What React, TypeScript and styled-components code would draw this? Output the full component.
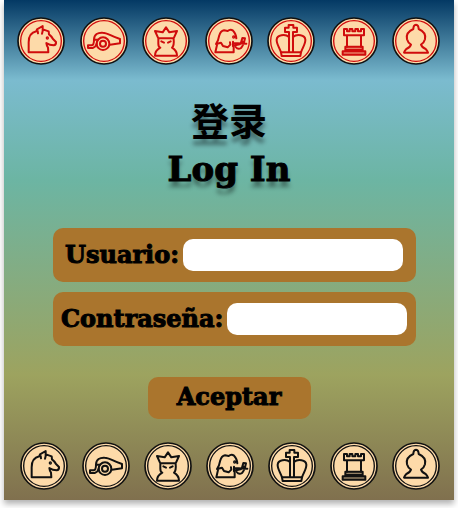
import React from "react";
import styled, { createGlobalStyle } from "styled-components";

const GlobalStyle = createGlobalStyle`
  * { box-sizing: border-box; }
  body { margin: 0; background: #fff; }
`;

const display = `"DejaVu Serif", "Noto Sans CJK SC", serif`;

const Card = styled.main`
  display: flex;
  flex-direction: column;
  align-items: center;
  margin: 0 4px 8px;
  padding: 17px 0 10px;
  color: #000;
  font-family: ${display};
  font-weight: 700;
  background: linear-gradient(
    to bottom,
    #043964 0%,
    #7bbbcf 16%,
    #6cb5a3 36%,
    #9da35f 75%,
    #80704e 100%
  );
  box-shadow: 0 4px 6px rgba(0, 0, 0, 0.3);
`;

const PieceRow = styled.div<{ $inset: number }>`
  display: flex;
  justify-content: space-between;
  align-self: stretch;
  padding: 0 14px 0 ${(p) => p.$inset}px;
`;

const Coin = styled.svg<{ $ink: string }>`
  display: block;
  width: 48px;
  height: 48px;
  fill: none;
  stroke: ${(p) => p.$ink};
  stroke-width: 6;
  stroke-linejoin: round;
  stroke-linecap: round;
`;

const Title = styled.h1`
  display: flex;
  flex-direction: column;
  align-items: center;
  margin: 29px 0 34px;
  font-size: 34px;
  line-height: 50px;
  text-shadow: 0 6px 4px rgba(0, 0, 0, 0.4);
  -webkit-text-stroke: 1px #000;
`;

const Chinese = styled.span`
  font-family: "Noto Sans CJK SC", sans-serif;
  font-size: 38px;
  -webkit-text-stroke: 0;
`;

const Form = styled.form`
  display: flex;
  flex-direction: column;
  align-items: center;
  align-self: stretch;
`;

const Fields = styled.div`
  display: flex;
  flex-direction: column;
  gap: 10px;
  align-self: stretch;
  padding: 0 38px 0 49px;
`;

const Field = styled.div<{ $pad: string }>`
  display: flex;
  align-items: center;
  gap: 4px;
  height: 54px;
  padding: ${(p) => p.$pad};
  border-radius: 10px;
  background: #aa752d;
`;

const Label = styled.label`
  font-size: 24px;
  line-height: 32px;
  -webkit-text-stroke: 1px #000;
`;

const TextBox = styled.input`
  flex: 1;
  min-width: 0;
  height: 32px;
  padding: 0 10px;
  border: 0;
  border-radius: 10px;
  background: #fff;
  font: 400 16px ${display};
`;

const Submit = styled.button`
  width: 163px;
  height: 42px;
  margin: 31px 0 23px;
  padding: 0 0 3px;
  border: 0;
  border-radius: 10px;
  background: #aa752d;
  color: #000;
  font: 700 24px/32px ${display};
  -webkit-text-stroke: 1px #000;
  cursor: pointer;
`;

const pieces: { name: string; art: React.ReactNode }[] = [
  {
    name: "horse",
    art: (
      <>
        <path d="M35 106V76Q35 48 58 43L60 37L77 27V42L80 38L95 43L96 52Q104 58 108 66L117 75Q118 84 110 85Q98 85 88 78Q89 87 93 92L94 106ZM77 42L75 50M62 42L63 49" />
        <circle cx="91" cy="63" r="2" />
      </>
    ),
  },
  {
    name: "cannon",
    art: (
      <>
        <circle cx="69" cy="80" r="19" />
        <circle cx="69" cy="80" r="9" />
        <path d="M42 68C42 52 54 46 68 47C82 47 92 57 120 66V79L90 83M53 68H42Q42 84 35 85H24V93H38Q48 90 50 80" />
      </>
    ),
  },
  {
    name: "general",
    art: (
      <>
        <path d="M39 42L49 64H95L105 42L82 46L72 31L62 46ZM49 66V80Q49 90 55 92C44 98 39 108 39 116H105C105 108 100 98 90 92Q97 86 95 66" />
        <path d="M58 73L66 77M86 73L78 77" />
      </>
    ),
  },
  {
    name: "elephant",
    art: (
      <>
        <path d="M36 84L31 106H86V89M33 81Q40 71 42 58Q46 42 57 40L68 42Q76 35 84 41Q93 50 94 64M33 81L48 77L54 87L68 91L76 83L75 76" />
        <path d="M84 74V88M84 78L124 80M84 86L104 82L112 73M92 90Q99 99 108 93Q116 84 120 64L112 63L107 80" />
        <circle cx="86" cy="60" r="2" />
      </>
    ),
  },
  {
    name: "king",
    art: (
      <>
        <path d="M66 106V45H54V32H65V24H79V32H90V45H78V106M66 60C54 50 30 54 29 68C28 80 37 91 42 106H102C107 91 116 80 115 68C114 54 90 50 78 60" />
        <path d="M42 106L44 117H100L102 106" />
      </>
    ),
  },
  {
    name: "rook",
    art: (
      <>
        <path d="M42 36V55H102V36H93V43H84V36H76V43H67V36H59V43H51V36ZM51 57V89M93 57V89" />
        <path d="M46 89H98V99H46ZM38 103H106V113H38Z" fill="currentColor" fillOpacity="0.45" />
      </>
    ),
  },
  {
    name: "bishop",
    art: (
      <path d="M72 23Q64 24 64 36C48 43 42 54 45 67Q48 78 57 83Q54 92 43 96Q38 101 36 107H108Q106 101 101 96Q90 92 87 83Q96 78 99 67C102 54 96 43 80 36Q80 24 72 23Z" />
    ),
  },
];

function Pieces({ ink, inset }: { ink: string; inset: number }) {
  return (
    <PieceRow $inset={inset} aria-hidden="true">
      {pieces.map((piece) => (
        <Coin key={piece.name} $ink={ink} color={ink} viewBox="0 0 144 144">
          <circle cx="72" cy="72" r="69" fill="#fddaa9" stroke="#111" strokeWidth="5" />
          <circle cx="72" cy="72" r="61" strokeWidth="4" />
          {piece.art}
        </Coin>
      ))}
    </PieceRow>
  );
}

export default function App() {
  return (
    <>
      <GlobalStyle />
      <Card>
        <Pieces ink="#d00c0c" inset={13} />
        <Title>
          <Chinese lang="zh">登录</Chinese>
          <span>Log In</span>
        </Title>
        <Form onSubmit={(e) => e.preventDefault()}>
          <Fields>
            <Field $pad="0 13px 0 12px">
              <Label htmlFor="user">Usuario:</Label>
              <TextBox id="user" type="text" />
            </Field>
            <Field $pad="0 9px 0 8px">
              <Label htmlFor="password">Contraseña:</Label>
              <TextBox id="password" type="password" />
            </Field>
          </Fields>
          <Submit type="submit">Aceptar</Submit>
        </Form>
        <Pieces ink="#111111" inset={16} />
      </Card>
    </>
  );
}
